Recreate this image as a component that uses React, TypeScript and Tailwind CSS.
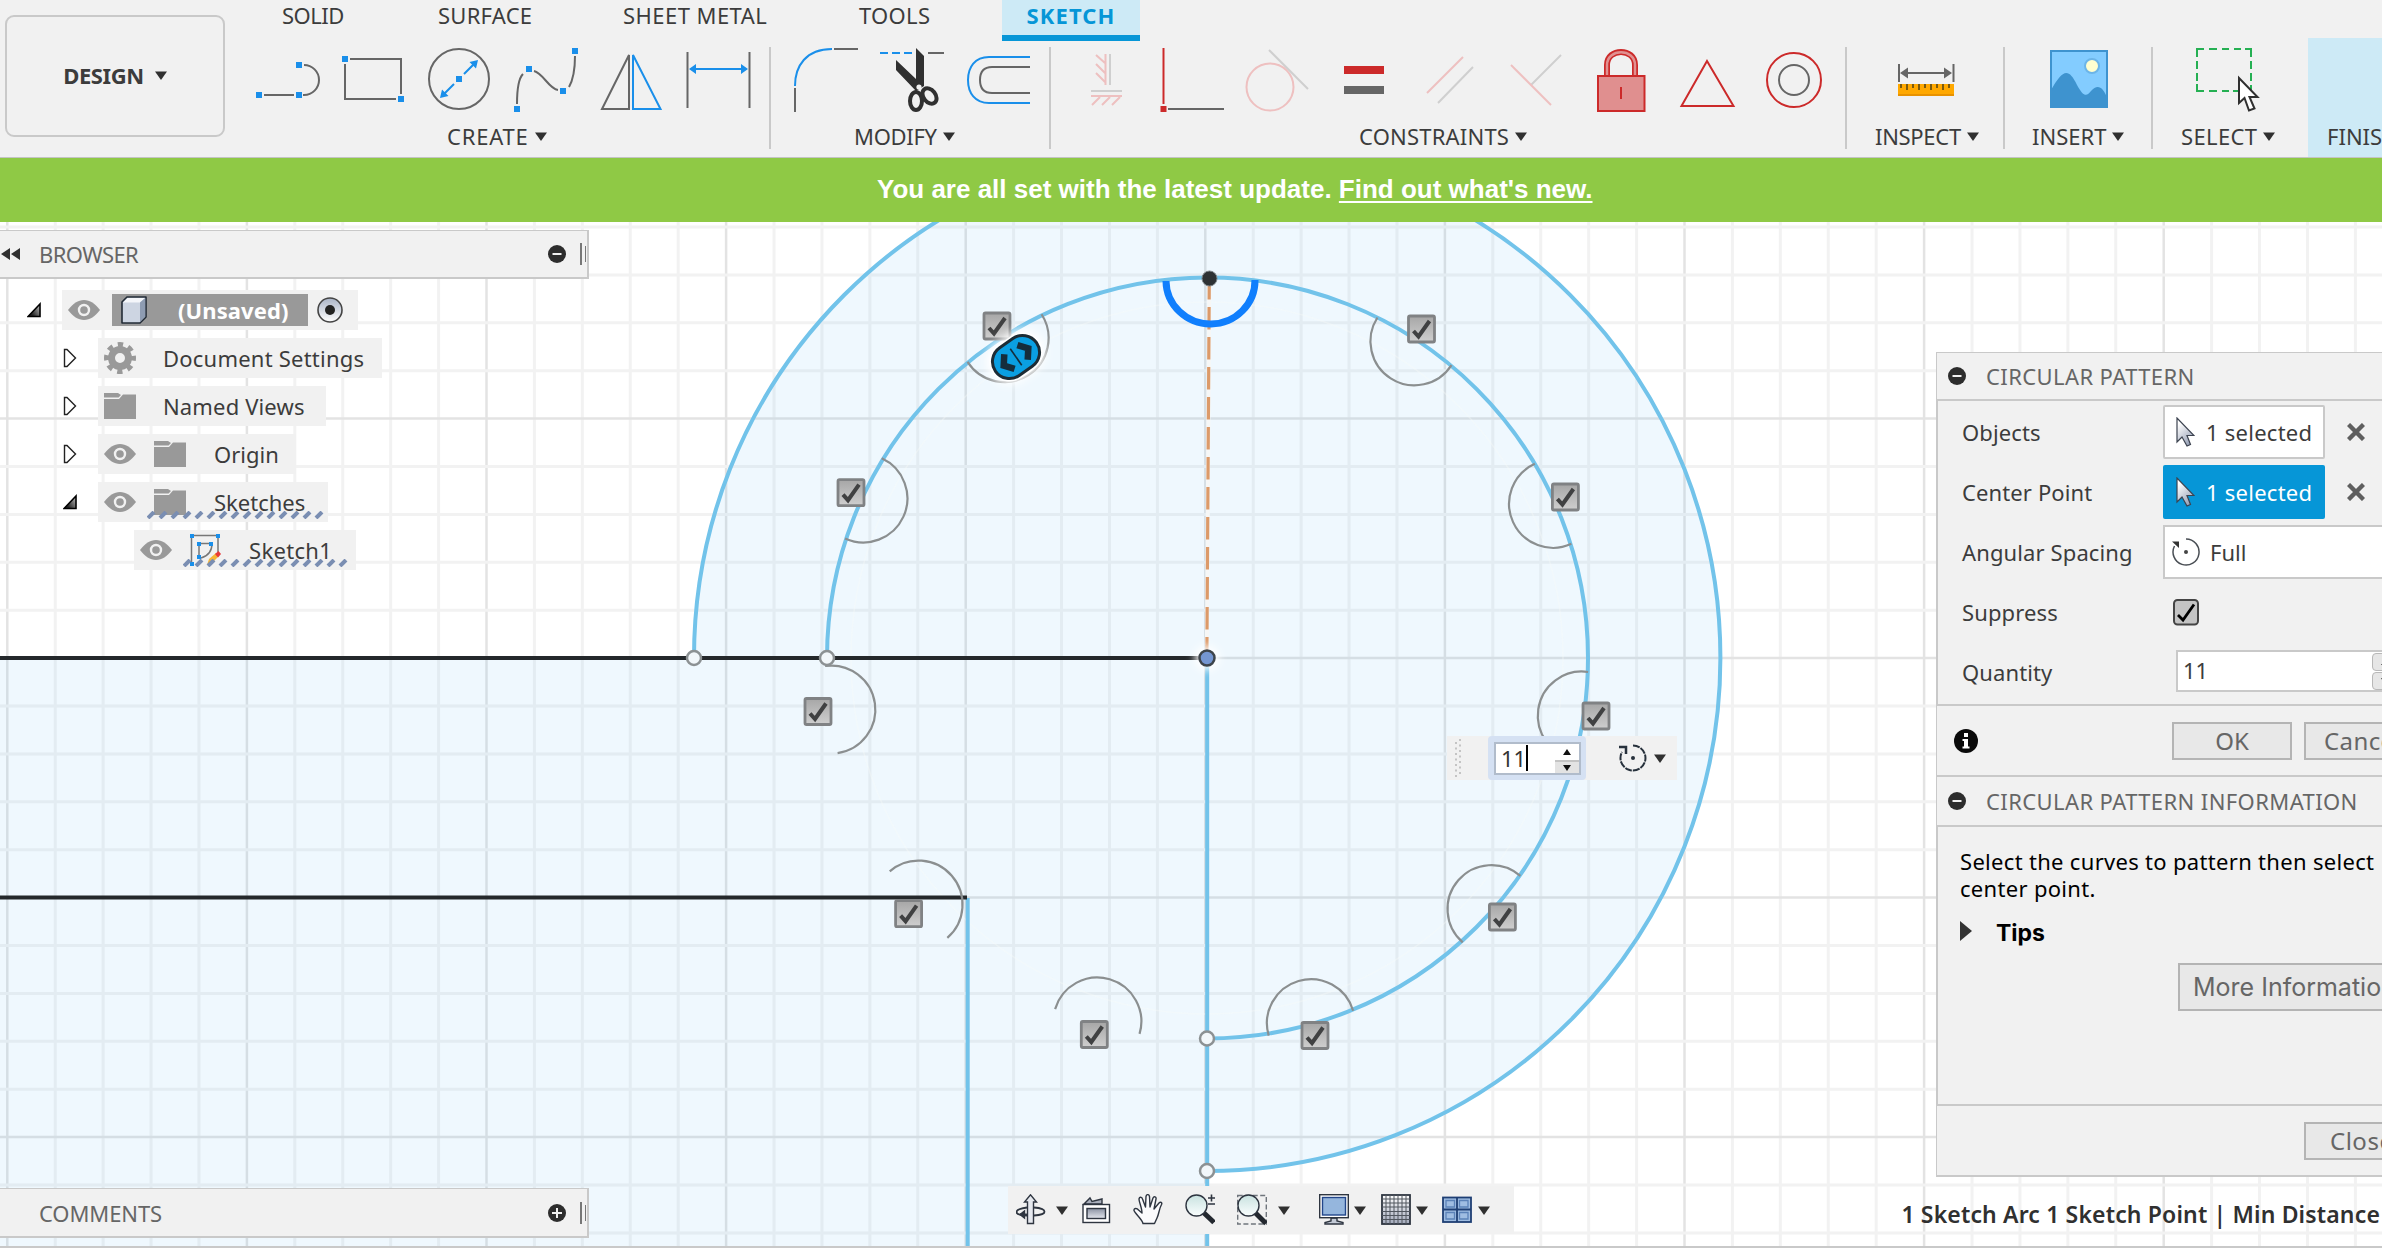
import React from "react";

type Kids = { children?: React.ReactNode };

const GRAY = "#666666";
const BLUE = "#1a8fea";
const RED = "#cc2a2a";
const PINK = "#eec0c0";
const PALE = "#cfcfcf";

/* Small downward arrow used beside menu labels */
function Caret({ className = "" }: { className?: string }) {
  return (
    <svg className={`h-[9px] w-3 shrink-0 ${className}`} viewBox="0 0 12 9">
      <path d="M0 0.5H12L6 9Z" fill="#303030" />
    </svg>
  );
}

/* Ribbon icons share one coordinate space; x is the left edge of the slot */
function Slot({ x, children }: Kids & { x: number }) {
  return (
    <svg className="h-[76px] w-[86px] shrink-0" viewBox={`${x} 40 86 76`} fill="none" strokeWidth="2">
      {children}
    </svg>
  );
}

function Sq({ x, y, c = BLUE, s = 6 }: { x: number; y: number; c?: string; s?: number }) {
  return <rect x={x - s / 2} y={y - s / 2} width={s} height={s} fill={c} />;
}

function Group({ label, pad, caret = true, children }: Kids & { label: string; pad: string; caret?: boolean }) {
  return (
    <>
      <div className="flex h-[76px] pt-0.5">{children}</div>
      <div className={`mt-2 flex h-7 items-center whitespace-nowrap text-[22px] leading-7 ${pad}`}>
        {label}
        {caret && <Caret className="ml-[6px]" />}
      </div>
    </>
  );
}

function Sep() {
  return <div className="mt-[9px] h-[102px] w-[2px] shrink-0 bg-[#c9c9c9]" />;
}

function Ribbon() {
  return (
    <header className="flex h-[158px] shrink-0 border-b border-[#c4c4c4] bg-[#f1f1f1] text-[#3c3c3c]">
      <div className="w-[232px] shrink-0 pl-[5px] pt-[15px]">
        <button className="flex h-[122px] w-[220px] items-center justify-center rounded-[9px] border-2 border-[#c9c9c9] pb-[2px] text-[22px] font-bold tracking-[-0.4px]">
          DESIGN
          <Caret className="ml-[11px]" />
        </button>
      </div>
      <div className="flex min-w-0 flex-1 flex-col">
        <nav className="flex h-[38px] shrink-0 pl-[50px] text-[22px] leading-[30px]">
          <div className="w-[156px] tracking-[-0.5px]">SOLID</div>
          <div className="w-[185px] tracking-[0.24px]">SURFACE</div>
          <div className="w-[236px] tracking-[0.45px]">SHEET METAL</div>
          <div className="w-[143px] tracking-[0.3px]">TOOLS</div>
          <div className="h-[41px] w-[138px] border-b-[6px] border-[#0696d7] bg-[#cdeaf6] text-center font-bold tracking-[1.1px] text-[#0696d7]">
            SKETCH
          </div>
        </nav>
        <div className="flex h-[119px]">
          <section className="w-[537px] shrink-0">
            <Group label="CREATE" pad="pl-[215px] tracking-[0.8px]">
              <div className="w-3" />
              <Slot x={244}>
                <path d="M264 95H294M303 95H304A15 15 0 0 0 304 65" stroke={GRAY} />
                <Sq x={259} y={95} /><Sq x={299} y={95} /><Sq x={299} y={65} />
              </Slot>
              <Slot x={330}>
                <path d="M350 59H401V94M396 99H345V64" stroke={GRAY} />
                <Sq x={345} y={59} /><Sq x={401} y={99} />
              </Slot>
              <Slot x={416}>
                <circle cx="459" cy="79" r="30" stroke={GRAY} />
                <path d="M464 74L474 64M454 84L444 94" stroke={BLUE} />
                <path d="M478 60L469.500 62L476 68.500ZM440 98L442 89.500L448.500 96Z" fill={BLUE} />
                <Sq x={459} y={79} />
              </Slot>
              <Slot x={502}>
                <path d="M517 104C517 88 519 78 523 74M534 71C543 73 549 89 558 90M569 87C573 80 575 70 575 56" stroke={GRAY} />
                <Sq x={517} y={109} /><Sq x={529} y={69} /><Sq x={563} y={91} /><Sq x={575} y={51} />
              </Slot>
              <Slot x={588}>
                <path d="M629 55V109H602Z" stroke={GRAY} />
                <path d="M633 55V109H660.500Z" stroke={BLUE} />
              </Slot>
              <Slot x={674}>
                <path d="M687.500 52V108M749.500 52V108" stroke={GRAY} />
                <path d="M693 69H744" stroke={BLUE} />
                <path d="M689 69L696 64V74ZM748 69L741 64V74Z" fill={BLUE} />
              </Slot>
            </Group>
          </section>
          <Sep />
          <section className="w-[278px] shrink-0">
            <Group label="MODIFY" pad="pl-[83px] tracking-[-0.3px]">
              <div className="w-3" />
              <Slot x={783}>
                <path d="M795 86C795 66 806 49 832 49" stroke={BLUE} />
                <path d="M795 88V112M834 49H858" stroke={GRAY} />
              </Slot>
              <Slot x={869}>
                <path d="M880 53H912" stroke={BLUE} strokeDasharray="8 4" />
                <path d="M928 53H944" stroke={GRAY} />
                <path d="M896 60L916 79V48L924 56V86L916 91L896 70Z" fill="#303030" />
                <ellipse cx="916" cy="101" rx="6" ry="9" stroke="#303030" strokeWidth="4" />
                <ellipse cx="929.500" cy="96" rx="6" ry="8.500" transform="rotate(-38 929.500 96)" stroke="#303030" strokeWidth="4" />
                <circle cx="919" cy="87" r="2.600" fill="#f1f1f1" />
              </Slot>
              <Slot x={955}>
                <path d="M1030 57H989C975 57 968 67 968 80C968 93 975 103 989 103H1030" stroke={BLUE} />
                <path d="M1030 67H992C983 67 980 73 980 80C980 87 983 93 992 93H1030" stroke={GRAY} />
              </Slot>
            </Group>
          </section>
          <Sep />
          <section className="w-[794px] shrink-0">
            <Group label="CONSTRAINTS" pad="pl-[308px] tracking-[0.2px]">
              <div className="w-3" />
              <Slot x={1063}>
                <path d="M1110 54V85M1091 91H1122" stroke={PALE} />
                <path d="M1105.500 54V85M1096 55L1105 63M1096 64L1105 73M1096 73L1105 82M1091 96H1122M1100 97L1092 105M1110 97L1102 105M1120 97L1112 105" stroke={PINK} />
              </Slot>
              <Slot x={1149}>
                <path d="M1163.500 48V104" stroke={RED} />
                <path d="M1168 109H1224" stroke={GRAY} />
                <Sq x={1163.5} y={109} c={RED} />
              </Slot>
              <Slot x={1235}>
                <path d="M1269 50L1308 89" stroke={PALE} />
                <circle cx="1270" cy="87" r="23.500" stroke={PINK} />
              </Slot>
              <Slot x={1321}>
                <rect x="1344" y="66" width="40" height="8" fill={RED} />
                <rect x="1344" y="86" width="40" height="8" fill={GRAY} />
              </Slot>
              <Slot x={1407}>
                <path d="M1427 93L1463 57" stroke={PINK} />
                <path d="M1438 103L1473 67" stroke={PALE} />
              </Slot>
              <Slot x={1493}>
                <path d="M1531 85L1561 55" stroke={PALE} />
                <path d="M1511 65L1551 105" stroke={PINK} />
              </Slot>
              <Slot x={1579}>
                <path d="M1607 75V65C1607 47.500 1635 47.500 1635 65V75" stroke={RED} strokeWidth="6" />
                <path d="M1607 76V65C1607 48 1635 48 1635 65V76" stroke="#e09191" strokeWidth="2.500" />
                <rect x="1598" y="76" width="46.500" height="35" fill="#e08f8f" stroke={RED} />
                <path d="M1621 87V99" stroke={RED} />
              </Slot>
              <Slot x={1665}>
                <path d="M1707 61L1733.500 106H1681.500Z" stroke={RED} />
              </Slot>
              <Slot x={1751}>
                <circle cx="1794" cy="80" r="27" stroke={RED} />
                <circle cx="1794" cy="80" r="15" stroke={GRAY} />
              </Slot>
            </Group>
          </section>
          <Sep />
          <section className="w-[156px] shrink-0">
            <Group label="INSPECT" pad="pl-[28px] tracking-[-0.3px]">
              <div className="w-[35px]" />
              <Slot x={1882}>
                <path d="M1899 64V82M1953.500 64V82M1904 73H1948" stroke={GRAY} />
                <path d="M1900 73L1908 67.500V78.500ZM1952 73L1944 67.500V78.500Z" fill={GRAY} />
                <rect x="1898" y="84" width="56" height="12" fill="#ffa800" />
                <rect x="1898" y="94" width="56" height="2" fill="#e89200" />
                <path d="M1901 84V88M1907 84V90M1913 84V88M1919 84V90M1925 84V88M1931 84V90M1937 84V88M1943 84V90M1949 84V88" stroke="#7a5a10" />
              </Slot>
            </Group>
          </section>
          <Sep />
          <section className="w-[146px] shrink-0">
            <Group label="INSERT" pad="pl-[27px]">
              <div className="w-[31px]" />
              <Slot x={2036}>
                <rect x="2051" y="51" width="56" height="56" fill="#83ccff" stroke="#3e93cf" />
                <circle cx="2092" cy="66" r="7" fill="#ffffd0" stroke="#6cb5e8" />
                <path d="M2051 90C2062 71 2068 66 2077 85C2084 98 2087 96 2091 91C2098 83 2103 88 2107 97V107H2051Z" fill="#3e93cf" />
              </Slot>
            </Group>
          </section>
          <Sep />
          <section className="w-[155px] shrink-0">
            <Group label="SELECT" pad="pl-[28px] tracking-[0.35px]">
              <div className="w-[34px]" />
              <Slot x={2187}>
                <path d="M2197 57V49H2204M2209 49H2217M2222 49H2229M2234 49H2241M2245 49H2251V57M2251 61V69M2251 73V81M2251 85V90M2197 61V69M2197 73V81M2197 84V91H2204M2209 91H2217M2222 91H2229M2233 91H2238" stroke="#25b053" />
                <path d="M2239 78V103L2244.500 98L2249 110.500L2254.500 108.500L2249.500 97H2257.500Z" fill="#fff" stroke="#303030" />
              </Slot>
            </Group>
          </section>
          <section className="min-w-0 flex-1 overflow-hidden bg-[#cdeaf6]">
            <Group label="FINISH SKETCH" pad="pl-[19px] tracking-[0px]" />
          </section>
        </div>
      </div>
    </header>
  );
}

/* ---------- Sketch drawing ---------- */

const vLines = Array.from({ length: 50 }, (_, i) => i);
const hLines = Array.from({ length: 22 }, (_, i) => i);
const copies = [1, 2, 3, 4, 5, 6, 7, 8, 9, 10];
const checks: [number, number][] = [
  [997, 326], [1421.5, 329], [851, 492.7], [1565.4, 497], [818, 711.5],
  [1596, 716], [908.6, 913.7], [1502.4, 917], [1094.3, 1034.5], [1315, 1035.5],
];
const openPoints: [number, number][] = [[694, 658], [827, 658], [1207, 1038.5], [1207, 1171]];

function SketchView() {
  return (
    <svg className="absolute inset-0 h-[1026px] w-[2382px]" viewBox="0 222 2382 1026" fill="none">
      <defs>
        <linearGradient id="chk" x1="0" y1="0" x2="0" y2="1">
          <stop offset="0" stopColor="#a6a6a6" />
          <stop offset="1" stopColor="#cfcfcf" />
        </linearGradient>
        <filter id="halo" x="-50%" y="-50%" width="200%" height="200%">
          <feGaussianBlur stdDeviation="4" />
        </filter>
      </defs>
      <rect y="222" width="2382" height="1026" fill="#ffffff" />
      {vLines.map((i) => (
        <path key={i} d={`M${7.3 + i * 47.92} 222V1248`} stroke={i % 5 ? "#f2f2f2" : "#e3e3e3"} strokeWidth={i % 5 ? 3 : 2.5} />
      ))}
      {hLines.map((i) => (
        <path key={i} d={`M0 ${227 + i * 47.9}H2382`} stroke={i % 5 === 4 ? "#e3e3e3" : "#f2f2f2"} strokeWidth={i % 5 === 4 ? 2.5 : 3} />
      ))}
      <path d="M0 658H694A513.200 513.200 0 1 1 1207.200 1171V1248H0Z" fill="#5ab9f5" fillOpacity="0.095" />
      <circle cx="1207" cy="658" r="356" stroke="#f8fdfa" strokeOpacity="0.35" strokeWidth="1.500" />
      <g stroke="#72c3ea" strokeWidth="4">
        <path d="M694 658A513.200 513.200 0 1 1 1207.200 1171" />
        <path d="M827 658A380.500 380.500 0 1 1 1207.200 1038.500" />
        <path d="M1207.200 658V1248M967.700 898V1248" />
      </g>
      <path d="M0 658H1203M0 897.600H967" stroke="#24282b" strokeWidth="4" />
      <path d="M1209.300 284L1206.900 645" stroke="#f6f7f6" strokeWidth="4" />
      <path d="M1209.300 277L1206.900 650" stroke="#dc9a69" strokeWidth="3.200" strokeDasharray="22.500 7.500" />
      {copies.map((i) => (
        <path key={i} d="M1166 279.500A44 44 0 0 0 1254 279.500" transform={`rotate(${i * (360 / 11)} 1207 658.6)`} stroke="#8b8f90" strokeWidth="2.200" />
      ))}
      <path d="M1166 281A44.500 43.500 0 0 0 1255 280" stroke="#107ffd" strokeWidth="7" />
      <circle cx="1209.500" cy="278.500" r="7.500" fill="#2e3234" stroke="#7c8488" strokeWidth="1" />
      <circle cx="1207" cy="658" r="12" fill="#fff" filter="url(#halo)" />
      <circle cx="1207" cy="658" r="7.500" fill="#7496d2" stroke="#3d444b" strokeWidth="2.500" />
      {openPoints.map(([x, y]) => (
        <circle key={`${x}-${y}`} cx={x} cy={y} r="7" fill="#f2f7fa" stroke="#8c9193" strokeWidth="2.500" />
      ))}
      {checks.map(([x, y]) => (
        <g key={`${x}-${y}`}>
          <rect x={x - 13} y={y - 13} width="26" height="26" rx="1.500" fill="url(#chk)" stroke="#808284" strokeWidth="2.800" />
          <path d={`M${x - 8} ${y + 2}L${x - 3} ${y + 7.5}L${x + 8} ${y - 8}`} stroke="#404142" strokeWidth="4" />
        </g>
      ))}
      <g transform="translate(1016 357) rotate(-35)">
        <rect x="-31" y="-23" width="62" height="46" rx="23" fill="#fff" filter="url(#halo)" />
        <rect x="-28" y="-20" width="56" height="40" rx="20" fill="#fff" />
        <rect x="-25" y="-17" width="50" height="34" rx="17" fill="#0a9fe2" stroke="#1d2c35" strokeWidth="3" />
        <path d="M-8 -9L-15 0L-8 9M8 -9L15 0L8 9" stroke="#152d3c" strokeWidth="6.500" />
        <path d="M0 -10V10" stroke="#152d3c" strokeWidth="1.600" />
      </g>
    </svg>
  );
}

/* ---------- Browser tree ---------- */

function RoundToggle({ plus = false }: { plus?: boolean }) {
  return (
    <svg className="h-[18px] w-[18px] shrink-0" viewBox="0 0 18 18">
      <circle cx="9" cy="9" r="9" fill="#2d2d2d" />
      <path d={plus ? "M4 9H14M9 4V14" : "M4.500 9H13.500"} stroke="#f1f1f1" strokeWidth="2" />
    </svg>
  );
}

function Grip() {
  return (
    <div className="ml-[14px] mr-px flex items-center gap-[3px]">
      <div className="h-[22px] w-[1.5px] bg-[#777]" />
      <div className="h-[16px] w-[1.5px] bg-[#777]" />
    </div>
  );
}

function Expander({ open }: { open: boolean }) {
  return open ? (
    <svg className="h-5 w-[14px] shrink-0" viewBox="0 0 14 20">
      <defs>
        <linearGradient id="tri" x1="0" y1="1" x2="1" y2="0.3">
          <stop offset="0.3" stopColor="#222" />
          <stop offset="1" stopColor="#aaa" />
        </linearGradient>
      </defs>
      <path d="M13 4V16.500H1Z" fill="url(#tri)" stroke="#000" strokeWidth="1.600" />
    </svg>
  ) : (
    <svg className="h-5 w-[14px] shrink-0" viewBox="0 0 14 20">
      <path d="M1.500 1.500H4L12.500 10L4 18.500H1.500Z" fill="#fff" stroke="#222" strokeWidth="1.400" />
    </svg>
  );
}

function Eye() {
  return (
    <svg className="h-5 w-8 shrink-0" viewBox="0 0 32 20">
      <path d="M0 10C5 3.500 10 0 16 0S27 3.500 32 10C27 16.500 22 20 16 20S5 16.500 0 10Z" fill="#999" />
      <circle cx="16" cy="10" r="5" fill="none" stroke="#f1f1f1" strokeWidth="2.400" />
    </svg>
  );
}

function Folder({ className = "" }: { className?: string }) {
  return (
    <svg className={`h-[26px] w-8 shrink-0 ${className}`} viewBox="0 0 32 26">
      <path d="M0 0H14L17 2L14.500 4.500H0ZM0 6H15L19 1.500H32V26H0Z" fill="#999" />
    </svg>
  );
}

function Stripes({ className }: { className: string }) {
  return (
    <svg className={`absolute h-2 ${className}`} fill="none">
      {Array.from({ length: 15 }, (_, i) => (
        <path key={i} d={`M${1 + i * 12} 7L${7 + i * 12} 1`} stroke="#7a8eb2" strokeWidth="4" />
      ))}
    </svg>
  );
}

function Row({ indent, block, open, children }: Kids & { indent: string; block: string; open?: boolean }) {
  return (
    <div className="flex h-10 items-center">
      <div className={`shrink-0 ${indent}`}>{open !== undefined && <Expander open={open} />}</div>
      <div className={`relative flex h-10 items-center bg-[#f1f1f1] pl-[6px] ${block}`}>{children}</div>
    </div>
  );
}

function Browser() {
  return (
    <aside className="relative flex h-full w-[589px] shrink-0 flex-col pb-[10px] pt-2 text-[22px] leading-none text-[#3c3c3c]">
      <div className="flex h-[49px] items-center border-b-2 border-r-2 border-t border-[#c9c9c9] bg-[#f1f1f1]">
        <svg className="h-3 w-5" viewBox="0 0 20 12">
          <path d="M1 6L10 0V12ZM11 6L20 0V12Z" fill="#303030" />
        </svg>
        <span className="ml-[19px] tracking-[-0.6px] text-[#666]">BROWSER</span>
        <div className="flex-1" />
        <RoundToggle />
        <Grip />
      </div>
      <div className="mt-[11px] flex flex-col gap-2 whitespace-nowrap">
        <Row indent="w-[62px] pl-[27px]" block="w-[296px]" open>
          <Eye />
          <div className="ml-3 flex h-8 w-[196px] items-center bg-[#999] pl-[9px] font-bold text-white">
            <svg className="h-7 w-[26px]" viewBox="0 0 26 28">
              <path d="M1 6L6 1H25V21L19 27H1Z" fill="#cdd5e2" stroke="#222b36" strokeWidth="1.600" strokeLinejoin="round" />
              <path d="M2 6.500L6.500 2H24L19 6.500Z" fill="#f4f6fa" />
              <path d="M19 6.500L24.200 2V20.500L19 26Z" fill="#8e9cb2" />
            </svg>
            <span className="ml-[31px] tracking-[0.1px]">(Unsaved)</span>
          </div>
          <svg className="ml-[9px] h-[26px] w-[26px]" viewBox="0 0 26 26">
            <defs>
              <linearGradient id="rad" x1="0" y1="0" x2="0" y2="1">
                <stop offset="0" stopColor="#a9b3c6" />
                <stop offset="1" stopColor="#fff" />
              </linearGradient>
            </defs>
            <circle cx="13" cy="13" r="12" fill="url(#rad)" stroke="#444" strokeWidth="1.600" />
            <circle cx="13" cy="13" r="5" fill="#222" />
          </svg>
        </Row>
        <Row indent="w-[98px] pl-[63px]" block="w-[284px]" open={false}>
          <svg className="h-8 w-8" viewBox="0 0 32 32" fill="none" stroke="#999">
            <circle cx="16" cy="16" r="8.500" strokeWidth="7" />
            <circle cx="16" cy="16" r="13.500" strokeWidth="5" strokeDasharray="5.300 5.300" strokeDashoffset="2.600" />
          </svg>
          <span className="ml-[27px] tracking-[0.22px]">Document Settings</span>
        </Row>
        <Row indent="w-[98px] pl-[63px]" block="w-[228px]" open={false}>
          <Folder />
          <span className="ml-[27px] tracking-[0.15px]">Named Views</span>
        </Row>
        <Row indent="w-[98px] pl-[63px]" block="w-[198px]" open={false}>
          <Eye />
          <Folder className="ml-[18px]" />
          <span className="ml-[28px]">Origin</span>
        </Row>
        <Row indent="w-[98px] pl-[63px]" block="w-[230px]" open>
          <Eye />
          <Folder className="ml-[18px]" />
          <span className="ml-[28px]">Sketches</span>
          <Stripes className="left-[49px] top-[29px] w-[178px]" />
        </Row>
        <Row indent="w-[134px]" block="w-[222px]">
          <Eye />
          <svg className="ml-[18px] h-8 w-8" viewBox="0 0 32 32" fill="none">
            <path d="M1.500 3V30M2 1.500H28M28 3V18M9 10V22M10 9.500H22C22 17 18 22 11 24" stroke="#777" strokeWidth="1.500" />
            <path d="M0 0h4v4h-4zM26 0h4v4h-4zM7 8h4v4h-4zM19 8h4v4h-4zM7 21h4v4h-4zM0 28h4v4h-4z" fill={BLUE} />
            <path d="M17 31L19 25L26 19L29 22L22 29Z" fill="#f5b536" />
            <path d="M25 20L28.500 17L31 20L28 23.500Z" fill="#e83a3a" />
          </svg>
          <span className="ml-[27px] tracking-[0.3px]">Sketch1</span>
          <Stripes className="left-[49px] top-[29px] w-[166px]" />
        </Row>
      </div>
      <div className="mt-auto flex h-[50px] items-center border-b-2 border-r-2 border-t border-[#c9c9c9] bg-[#f1f1f1]">
        <span className="ml-[39px] tracking-[-0.1px] text-[#666]">COMMENTS</span>
        <div className="flex-1" />
        <RoundToggle plus />
        <Grip />
      </div>
    </aside>
  );
}

/* ---------- Circular pattern dialog ---------- */

function Pointer() {
  return (
    <svg className="h-[30px] w-[19px] shrink-0" viewBox="0 0 19 30">
      <defs>
        <linearGradient id="ptr" x1="0" y1="0" x2="0.6" y2="1">
          <stop offset="0.2" stopColor="#fff" />
          <stop offset="1" stopColor="#9aa3b8" />
        </linearGradient>
      </defs>
      <path d="M1 1V25L6 20L11 29L14.500 27.500L11 18.500H18Z" fill="url(#ptr)" stroke="#3c4350" strokeWidth="1.200" />
    </svg>
  );
}

function Cross() {
  return (
    <svg className="ml-[22px] h-[18px] w-[18px]" viewBox="0 0 18 18">
      <path d="M1.500 1.500L16.500 16.500M16.500 1.500L1.500 16.500" stroke="#5f5f5f" strokeWidth="4.400" />
    </svg>
  );
}

function Field({ label, children }: Kids & { label: string }) {
  return (
    <div className="flex h-[60px] items-center pl-6">
      <div className="w-[201px] shrink-0 tracking-[0.12px]">{label}</div>
      {children}
    </div>
  );
}

function PanelHeader({ title, className }: { title: string; className: string }) {
  return (
    <div className={`flex shrink-0 items-center border-b-2 border-l border-[#c9c9c9] pl-[11px] text-[#666] ${className}`}>
      <RoundToggle />
      <span className="ml-[20px] tracking-[0.4px]">{title}</span>
    </div>
  );
}

const buttonLook = "flex items-center border-2 border-[#b4b4b4] bg-[#e8e8e8] text-[#666]";

function PatternPanel() {
  return (
    <aside className="relative mt-[130px] flex h-[825px] w-[446px] shrink-0 flex-col overflow-hidden whitespace-nowrap bg-[#f1f1f1] text-[22px] leading-none text-[#3c3c3c]">
      <PanelHeader title="CIRCULAR PATTERN" className="h-[49px] border-t" />
      <div className="h-[305px] shrink-0 border-b-2 border-l-2 border-[#c9c9c9] pt-px">
        <Field label="Objects">
          <div className="flex h-[54px] w-[162px] items-center rounded-[2px] border-2 border-[#c9c9c9] bg-white pl-[11px]">
            <Pointer />
            <span className="ml-[11px] tracking-[0.25px]">1 selected</span>
          </div>
          <Cross />
        </Field>
        <Field label="Center Point">
          <div className="flex h-[54px] w-[162px] items-center rounded-[2px] bg-[#0696d7] pl-[13px] text-white">
            <Pointer />
            <span className="ml-[11px] tracking-[0.25px]">1 selected</span>
          </div>
          <Cross />
        </Field>
        <Field label="Angular Spacing">
          <div className="flex h-[54px] w-[300px] shrink-0 items-center border-2 border-[#c9c9c9] bg-white pl-[6px]">
            <svg className="h-[30px] w-[30px]" viewBox="0 0 30 30" fill="none">
              <path d="M15 2A13 13 0 1 1 3.500 9" stroke="#4a4f55" strokeWidth="1.500" />
              <path d="M1 4.500H8V11Z" fill="#333" />
              <circle cx="15" cy="15" r="2" fill="#444" />
            </svg>
            <span className="ml-[9px]">Full</span>
          </div>
        </Field>
        <Field label="Suppress">
          <svg className="ml-[10px] h-[27px] w-[26px]" viewBox="0 0 26 27" fill="none">
            <rect x="1" y="1" width="24" height="24.500" rx="3.500" fill="#c4c4c4" stroke="#444" strokeWidth="2" />
            <path d="M5 16L10 21L21 5.500" stroke="#000" strokeWidth="2.800" />
          </svg>
        </Field>
        <Field label="Quantity">
          <div className="ml-[13px] -mt-[2px] flex h-[42px] w-[260px] shrink-0 border-2 border-[#c9c9c9] bg-white">
            <span className="w-[194px] pl-[5px] leading-[37px]">11</span>
            <div className="flex w-8 flex-col gap-px pt-px">
              <div className="flex h-[18px] items-center rounded-l border border-[#b8b8b8] bg-[#e6e6e6] pl-2">
                <svg className="h-[6px] w-2" viewBox="0 0 8 6"><path d="M4 0L8 6H0Z" fill="#333" /></svg>
              </div>
              <div className="flex h-[18px] items-center rounded-l border border-[#b8b8b8] bg-[#e6e6e6] pl-2">
                <svg className="h-[6px] w-2" viewBox="0 0 8 6"><path d="M4 6L8 0H0Z" fill="#333" /></svg>
              </div>
            </div>
          </div>
        </Field>
      </div>
      <div className="flex h-[71px] shrink-0 items-center border-b-2 border-l border-[#c9c9c9] pl-[17px]">
        <svg className="h-6 w-6 shrink-0" viewBox="0 0 24 24">
          <circle cx="12" cy="12" r="12" fill="#0a0a0a" />
          <path d="M10 4H14V8H10ZM8.500 10H14V17.500H15.500V19.500H8.500V17.500H10V12H8.500Z" fill="#fff" />
        </svg>
        <div className={`ml-[194px] h-[38px] w-[120px] shrink-0 justify-center text-[24px] ${buttonLook}`}>OK</div>
        <div className={`ml-3 h-[38px] w-[120px] shrink-0 pl-[18px] text-[24px] tracking-[0.4px] ${buttonLook}`}>Cancel</div>
      </div>
      <PanelHeader title="CIRCULAR PATTERN INFORMATION" className="h-[50px]" />
      <div className="h-[279px] shrink-0 border-b-2 border-l-2 border-[#c9c9c9] pl-[22px] pt-[21px] text-black">
        <p className="leading-[26.5px] tracking-[0.31px]">
          Select the curves to pattern then select<br />center point.
        </p>
        <div className="mt-[18px] flex items-center">
          <svg className="h-5 w-3 -translate-y-[2px]" viewBox="0 0 12 20">
            <path d="M0 0L12 10L0 20Z" fill="#333" />
          </svg>
          <span className="ml-[24px] font-['Inter'] text-[23px] font-bold leading-7">Tips</span>
        </div>
        <div className={`ml-[218px] mt-4 h-[48px] w-[240px] pl-[13px] font-['Inter',sans-serif] text-[25px] ${buttonLook}`}>More Information</div>
      </div>
      <div className="flex h-[71px] shrink-0 items-center border-b-2 border-l border-[#c9c9c9] pl-[367px]">
        <div className={`h-[38px] w-[120px] shrink-0 pl-[24px] text-[24px] tracking-[0.5px] ${buttonLook}`}>Close</div>
      </div>
    </aside>
  );
}

/* ---------- Floating quantity input ---------- */

function QuantityInput() {
  return (
    <div className="absolute left-[1447px] top-[514px] flex h-[44px] w-[230px] items-center bg-[#f1f1f1]">
      <svg className="ml-2 h-[38px] w-[7px]" viewBox="0 0 7 38">
        {Array.from({ length: 7 }, (_, i) => (
          <path key={i} d={`M0 ${i * 5.5 + 3}h2v2h-2zM4 ${i * 5.5}h2v2h-2z`} fill="#c4c4c4" />
        ))}
      </svg>
      <div className="ml-[26px] flex h-[44px] w-[98px] items-center rounded-[4px] bg-[#d5e1f3] pl-[6px]">
        <div className="flex h-[33px] w-[87px] border-2 border-[#b1bccb] bg-white text-[22px] leading-[28px] text-[#333]">
          <div className="flex w-[59px] items-center pl-[5px]">
            11
            <div className="h-[26px] w-[2px] bg-black" />
          </div>
          <div className="flex flex-1 flex-col">
            <div className="flex h-[16px] items-center justify-center rounded-b bg-white">
              <svg className="h-[6px] w-2" viewBox="0 0 8 6"><path d="M4 0L8 6H0Z" fill="#111" /></svg>
            </div>
            <div className="flex flex-1 items-center justify-center border-t-2 border-[#c4c4c4] bg-[#e3e3e3]">
              <svg className="mt-[2px] h-[6px] w-2" viewBox="0 0 8 6"><path d="M4 6L8 0H0Z" fill="#111" /></svg>
            </div>
          </div>
        </div>
      </div>
      <svg className="ml-[33px] h-7 w-7" viewBox="0 0 28 28" fill="none">
        <path d="M14 1.500A12.500 12.500 0 1 1 3 8" stroke="#27313c" strokeWidth="2" strokeDasharray="7 1" />
        <path d="M0 3H7V10" stroke="#27313c" strokeWidth="2.500" />
        <circle cx="14" cy="14" r="2" fill="#27313c" />
      </svg>
      <Caret className="ml-[7px]" />
    </div>
  );
}

/* ---------- Navigation bar ---------- */

function NavIcon({ className = "", children }: Kids & { className?: string }) {
  return (
    <svg className={`h-8 w-[30px] shrink-0 ${className}`} viewBox="0 0 30 32" fill="none" stroke="#2e3540" strokeWidth="1.400">
      {children}
    </svg>
  );
}

function NavBar() {
  return (
    <div className="absolute left-[1008px] top-[964px] flex h-12 w-[506px] items-center bg-[#f1f1f1] pl-2">
      <svg width="0" height="0" className="absolute">
        <defs>
          <linearGradient id="glass" x1="0" y1="0" x2="0" y2="1">
            <stop offset="0" stopColor="#c9e2e0" />
            <stop offset="1" stopColor="#fafefe" />
          </linearGradient>
          <linearGradient id="steel" x1="0" y1="0" x2="0" y2="1">
            <stop offset="0" stopColor="#8b92a3" />
            <stop offset="1" stopColor="#e4e7ee" />
          </linearGradient>
          <linearGradient id="lattice" x1="0" y1="0" x2="0" y2="1">
            <stop offset="0" stopColor="#ffffff" />
            <stop offset="1" stopColor="#a2a9bb" />
          </linearGradient>
        </defs>
      </svg>
      <NavIcon>
        <path d="M11 13.500C-3 15.500 -3 21 11 21.500M18 13.500C32 14.500 32 21 18 21.500L4 20.500" strokeWidth="1.800" />
        <path d="M11.500 29.500V8H8.500L14.500 0.800L20.500 8H17.500V29.500Z" fill="#e6e9ef" />
        <path d="M5 20.500H11.500" strokeWidth="1.800" />
        <path d="M4 20.500L8.500 17V24Z" fill="#2e3540" />
      </NavIcon>
      <Caret className="ml-[10px]" />
      <NavIcon className="ml-[14px]">
        <path d="M2 10L8 4L10 7.500L20 5V10Z" fill="#a9afbc" />
        <rect x="1" y="10.500" width="26.500" height="18" fill="#fff" />
        <rect x="5" y="14.500" width="18.500" height="10" fill="url(#steel)" />
      </NavIcon>
      <NavIcon className="ml-[21px]">
        <path d="M10 29.500C9 25 2 19.500 1 16.500C0.800 14 4 14 5.500 16L9 19C9 14 6 8 6 5C6.500 2.500 9 3 9.500 5L12.500 13L13 2.500C13.500 0 16 0 16.500 2.500L17 13L20 4C21 1.800 23.500 2.800 23 5L21 15L26 9C27.500 7.500 29.500 8.500 28.500 10.500C26 15 26 20 24 24L21.500 29.500Z" fill="#fbfbfd" strokeLinejoin="round" />
      </NavIcon>
      <NavIcon className="ml-[22px]">
        <path d="M19 19L29 28.500" stroke="#23282f" strokeWidth="5" />
        <circle cx="11.500" cy="11.500" r="10.500" fill="url(#glass)" />
        <path d="M26.500 0.500V7.500M23 4H30M23 10H30" strokeWidth="1.600" />
      </NavIcon>
      <NavIcon className="ml-[22px]">
        <rect x="0.700" y="1.500" width="28.600" height="28.500" strokeDasharray="5 2.500" stroke="#6f757c" />
        <path d="M18.500 19L29 29.500" stroke="#23282f" strokeWidth="5" />
        <circle cx="11.500" cy="11.500" r="10.500" fill="url(#glass)" />
      </NavIcon>
      <Caret className="ml-[11px]" />
      <NavIcon className="ml-[29px]">
        <path d="M12 24V27L6 28.500V30H24V28.500L18 27V24Z" fill="#c3cad6" />
        <rect x="0.700" y="0.700" width="28.600" height="23" fill="#fff" />
        <rect x="3.500" y="3.500" width="23" height="17.500" fill="#95b6dd" stroke="#22468a" />
      </NavIcon>
      <Caret className="ml-[5px]" />
      <NavIcon className="ml-[15px]">
        <rect x="1" y="1" width="28" height="29" fill="url(#lattice)" strokeWidth="1.800" />
        <path d="M5 1V30M9 1V30M13 1V30M17 1V30M21 1V30M25 1V30M1 5H29M1 9H29M1 13H29M1 17.500H29M1 21.500H29M1 25.500H29" stroke="#50565f" strokeWidth="1" />
      </NavIcon>
      <Caret className="ml-[5px]" />
      <NavIcon className="ml-[14px]">
        <rect x="1" y="3.500" width="28" height="24.500" fill="#9fbde2" stroke="#1e3f74" strokeWidth="1.800" />
        <path d="M15 3.500V28M1 15.500H29" stroke="#1e3f74" strokeWidth="1.800" />
        <path d="M4 6.500H12.500V13H4ZM17.500 6.500H26V13H17.500ZM4 18.500H12.500V25H4ZM17.500 18.500H26V25H17.500Z" stroke="#5b82b8" strokeWidth="1.300" />
      </NavIcon>
      <Caret className="ml-[6px]" />
    </div>
  );
}

export default function App() {
  return (
    <div className="flex h-[1248px] w-[2382px] flex-col overflow-hidden bg-white font-['Noto_Sans',sans-serif]">
      <Ribbon />
      <div className="flex h-16 shrink-0 items-center bg-[#8fc945] pl-[877px] font-['Liberation_Sans',sans-serif] text-[26px] font-bold text-white">
        <p className="whitespace-nowrap pb-[2px] leading-[62px]">
          You are all set with the latest update.{" "}
          <a className="underline decoration-2 underline-offset-[3px]">Find out what's new.</a>
        </p>
      </div>
      <main className="relative flex min-h-0 flex-1 justify-between">
        <SketchView />
        <Browser />
        <PatternPanel />
        <QuantityInput />
        <NavBar />
        <div className="absolute right-[2px] top-[976px] whitespace-nowrap text-[23px] font-semibold leading-8 tracking-[0.15px] text-[#303030]">
          1 Sketch Arc 1 Sketch Point | Min Distance
        </div>
        <div className="absolute inset-x-0 bottom-0 h-[2px] bg-[#c9c9c9]" />
      </main>
    </div>
  );
}
